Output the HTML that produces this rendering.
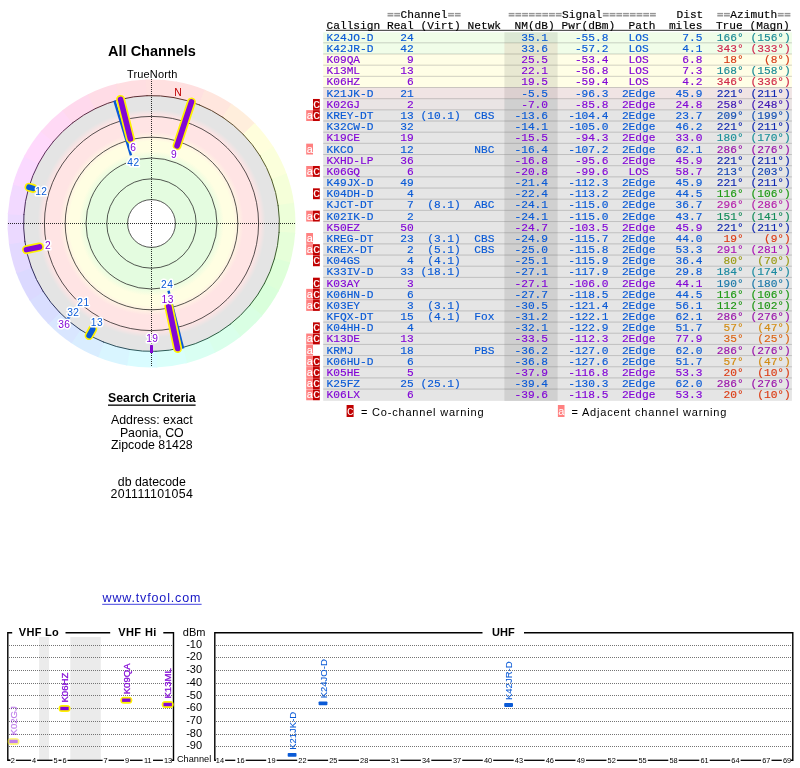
<!DOCTYPE html>
<html><head><meta charset="utf-8"><title>TV Fool</title>
<style>
html,body{margin:0;padding:0;background:#fff;}
svg{display:block;will-change:transform;}
text{font-family:"Liberation Sans",sans-serif;}
.m{font-family:"Liberation Mono",monospace;font-size:11.2px;white-space:pre;stroke-width:0.16px;}
.s{font-family:"Liberation Sans",sans-serif;}
.rl{font-family:"Liberation Sans",sans-serif;font-size:10.2px;letter-spacing:0.5px;text-anchor:middle;stroke:#fff;stroke-width:3px;stroke-linejoin:round;paint-order:stroke fill;}
</style></head><body>
<svg width="800" height="768" viewBox="0 0 800 768">
<rect width="800" height="768" fill="#fff"/>
<defs>
<radialGradient id="rg" gradientUnits="userSpaceOnUse" cx="151.5" cy="223.5" r="127.9">
<stop offset="0.0000" stop-color="#ffffff"/>
<stop offset="0.1869" stop-color="#ffffff"/>
<stop offset="0.1869" stop-color="#e4fce0"/>
<stop offset="0.5004" stop-color="#e4fce0"/>
<stop offset="0.5668" stop-color="#fffee2"/>
<stop offset="0.6411" stop-color="#fffee2"/>
<stop offset="0.7193" stop-color="#ffe4e4"/>
<stop offset="0.8405" stop-color="#ffe4e4"/>
<stop offset="0.8913" stop-color="#e4e4e4"/>
<stop offset="1.0000" stop-color="#e4e4e4"/>
</radialGradient>
</defs>
<path d="M151.50,223.50 L175.76,81.56 A144.0,144.0 0 0 1 206.14,90.27 Z" fill="#ffe0e0"/>
<path d="M151.50,223.50 L204.74,89.70 A144.0,144.0 0 0 1 232.65,104.54 Z" fill="#ffe6de"/>
<path d="M151.50,223.50 L231.40,103.70 A144.0,144.0 0 0 1 255.61,124.01 Z" fill="#ffeedc"/>
<path d="M151.50,223.50 L254.56,122.93 A144.0,144.0 0 0 1 274.02,147.83 Z" fill="#fffedc"/>
<path d="M151.50,223.50 L273.22,146.55 A144.0,144.0 0 0 1 287.07,174.96 Z" fill="#fbffdb"/>
<path d="M151.50,223.50 L286.56,173.54 A144.0,144.0 0 0 1 294.20,204.21 Z" fill="#f5ffd9"/>
<path d="M151.50,223.50 L293.99,202.71 A144.0,144.0 0 0 1 295.09,234.30 Z" fill="#edffd9"/>
<path d="M151.50,223.50 L295.20,232.79 A144.0,144.0 0 0 1 289.71,263.92 Z" fill="#e6ffd9"/>
<path d="M151.50,223.50 L290.13,262.47 A144.0,144.0 0 0 1 278.29,291.77 Z" fill="#deffd9"/>
<path d="M151.50,223.50 L279.00,290.44 A144.0,144.0 0 0 1 261.32,316.64 Z" fill="#d9ffdb"/>
<path d="M151.50,223.50 L262.29,315.48 A144.0,144.0 0 0 1 239.56,337.44 Z" fill="#d9ffe3"/>
<path d="M151.50,223.50 L240.75,336.51 A144.0,144.0 0 0 1 213.95,353.26 Z" fill="#d9ffeb"/>
<path d="M151.50,223.50 L215.30,352.59 A144.0,144.0 0 0 1 185.60,363.40 Z" fill="#d9fff2"/>
<path d="M151.50,223.50 L187.07,363.04 A144.0,144.0 0 0 1 155.77,367.44 Z" fill="#d9fffa"/>
<path d="M151.50,223.50 L157.28,367.38 A144.0,144.0 0 0 1 125.75,365.18 Z" fill="#d9fcff"/>
<path d="M151.50,223.50 L127.24,365.44 A144.0,144.0 0 0 1 96.86,356.73 Z" fill="#d9f5ff"/>
<path d="M151.50,223.50 L98.26,357.30 A144.0,144.0 0 0 1 70.35,342.46 Z" fill="#d9edff"/>
<path d="M151.50,223.50 L71.60,343.30 A144.0,144.0 0 0 1 47.39,322.99 Z" fill="#d9e6ff"/>
<path d="M151.50,223.50 L48.44,324.07 A144.0,144.0 0 0 1 28.98,299.17 Z" fill="#d9deff"/>
<path d="M151.50,223.50 L29.78,300.45 A144.0,144.0 0 0 1 15.93,272.04 Z" fill="#dbd9ff"/>
<path d="M151.50,223.50 L16.44,273.46 A144.0,144.0 0 0 1 8.80,242.79 Z" fill="#e3d9ff"/>
<path d="M151.50,223.50 L9.01,244.29 A144.0,144.0 0 0 1 7.91,212.70 Z" fill="#ebd9ff"/>
<path d="M151.50,223.50 L7.80,214.21 A144.0,144.0 0 0 1 13.29,183.08 Z" fill="#f2d9ff"/>
<path d="M151.50,223.50 L12.87,184.53 A144.0,144.0 0 0 1 24.71,155.23 Z" fill="#fad9ff"/>
<path d="M151.50,223.50 L24.00,156.56 A144.0,144.0 0 0 1 41.68,130.36 Z" fill="#ffd9fc"/>
<path d="M151.50,223.50 L40.71,131.52 A144.0,144.0 0 0 1 63.44,109.56 Z" fill="#ffd9f5"/>
<path d="M151.50,223.50 L62.25,110.49 A144.0,144.0 0 0 1 89.05,93.74 Z" fill="#ffd9ed"/>
<path d="M151.50,223.50 L87.70,94.41 A144.0,144.0 0 0 1 117.40,83.60 Z" fill="#ffdce6"/>
<path d="M151.50,223.50 L115.93,83.96 A144.0,144.0 0 0 1 147.23,79.56 Z" fill="#ffdee2"/>
<path d="M151.50,223.50 L145.72,79.62 A144.0,144.0 0 0 1 177.25,81.82 Z" fill="#ffe0e0"/>
<circle cx="151.5" cy="223.5" r="127.9" fill="url(#rg)"/>
<path d="M173.27,97.47 A127.9,127.9 0 0 1 199.83,105.08" fill="none" stroke="#5d3a2d" stroke-width="1"/>
<path d="M199.00,104.75 A127.9,127.9 0 0 1 223.39,117.72" fill="none" stroke="#5d432d" stroke-width="1"/>
<path d="M222.65,117.22 A127.9,127.9 0 0 1 243.81,134.97" fill="none" stroke="#5d4d2d" stroke-width="1"/>
<path d="M243.19,134.33 A127.9,127.9 0 0 1 260.20,156.10" fill="none" stroke="#5d572d" stroke-width="1"/>
<path d="M259.73,155.35 A127.9,127.9 0 0 1 271.84,180.18" fill="none" stroke="#5a5d2d" stroke-width="1"/>
<path d="M271.53,179.34 A127.9,127.9 0 0 1 278.22,206.14" fill="none" stroke="#505d2d" stroke-width="1"/>
<path d="M278.09,205.26 A127.9,127.9 0 0 1 279.06,232.87" fill="none" stroke="#465d2d" stroke-width="1"/>
<path d="M279.12,231.98 A127.9,127.9 0 0 1 274.32,259.18" fill="none" stroke="#3d5d2d" stroke-width="1"/>
<path d="M274.57,258.32 A127.9,127.9 0 0 1 264.22,283.94" fill="none" stroke="#335d2d" stroke-width="1"/>
<path d="M264.64,283.15 A127.9,127.9 0 0 1 249.19,306.05" fill="none" stroke="#2d5d30" stroke-width="1"/>
<path d="M249.76,305.37 A127.9,127.9 0 0 1 229.89,324.56" fill="none" stroke="#2d5d3a" stroke-width="1"/>
<path d="M230.59,324.01 A127.9,127.9 0 0 1 207.17,338.65" fill="none" stroke="#2d5d43" stroke-width="1"/>
<path d="M207.97,338.26 A127.9,127.9 0 0 1 182.01,347.71" fill="none" stroke="#2d5d4d" stroke-width="1"/>
<path d="M182.87,347.49 A127.9,127.9 0 0 1 155.52,351.34" fill="none" stroke="#2d5d57" stroke-width="1"/>
<path d="M156.41,351.31 A127.9,127.9 0 0 1 128.85,349.38" fill="none" stroke="#2d5a5d" stroke-width="1"/>
<path d="M129.73,349.53 A127.9,127.9 0 0 1 103.17,341.92" fill="none" stroke="#2d505d" stroke-width="1"/>
<path d="M104.00,342.25 A127.9,127.9 0 0 1 79.61,329.28" fill="none" stroke="#2d465d" stroke-width="1"/>
<path d="M80.35,329.78 A127.9,127.9 0 0 1 59.19,312.03" fill="none" stroke="#2d3d5d" stroke-width="1"/>
<path d="M59.81,312.67 A127.9,127.9 0 0 1 42.80,290.90" fill="none" stroke="#2d335d" stroke-width="1"/>
<path d="M43.27,291.65 A127.9,127.9 0 0 1 31.16,266.82" fill="none" stroke="#302d5d" stroke-width="1"/>
<path d="M31.47,267.66 A127.9,127.9 0 0 1 24.78,240.86" fill="none" stroke="#3a2d5d" stroke-width="1"/>
<path d="M24.91,241.74 A127.9,127.9 0 0 1 23.94,214.13" fill="none" stroke="#432d5d" stroke-width="1"/>
<path d="M23.88,215.02 A127.9,127.9 0 0 1 28.68,187.82" fill="none" stroke="#4d2d5d" stroke-width="1"/>
<path d="M28.43,188.68 A127.9,127.9 0 0 1 38.78,163.06" fill="none" stroke="#572d5d" stroke-width="1"/>
<path d="M38.36,163.85 A127.9,127.9 0 0 1 53.81,140.95" fill="none" stroke="#5d2d5a" stroke-width="1"/>
<path d="M53.24,141.63 A127.9,127.9 0 0 1 73.11,122.44" fill="none" stroke="#5d2d50" stroke-width="1"/>
<path d="M72.41,122.99 A127.9,127.9 0 0 1 95.83,108.35" fill="none" stroke="#5d2d46" stroke-width="1"/>
<path d="M95.03,108.74 A127.9,127.9 0 0 1 120.99,99.29" fill="none" stroke="#5d2d3d" stroke-width="1"/>
<path d="M120.13,99.51 A127.9,127.9 0 0 1 147.48,95.66" fill="none" stroke="#5d2d33" stroke-width="1"/>
<path d="M146.59,95.69 A127.9,127.9 0 0 1 174.15,97.62" fill="none" stroke="#5d302d" stroke-width="1"/>
<circle cx="151.5" cy="223.5" r="23.9" fill="none" stroke="#151515" stroke-width="0.72"/>
<circle cx="151.5" cy="223.5" r="44.7" fill="none" stroke="#151515" stroke-width="0.72"/>
<circle cx="151.5" cy="223.5" r="65.5" fill="none" stroke="#151515" stroke-width="0.72"/>
<circle cx="151.5" cy="223.5" r="86.3" fill="none" stroke="#151515" stroke-width="0.72"/>
<circle cx="151.5" cy="223.5" r="107.1" fill="none" stroke="#151515" stroke-width="0.72"/>
<path d="M8,223.5 H296 M151.5,79 V367" stroke="#000" stroke-opacity="0.82" stroke-width="1" stroke-dasharray="1 1" fill="none" shape-rendering="crispEdges"/>
<path d="M114.39,100.58 L130.95,155.43" stroke="#0a5ad6" stroke-width="2.4"/>
<path d="M183.14,348.56 L168.50,290.68" stroke="#0a5ad6" stroke-width="2.4"/>
<path d="M66.69,320.04 L76.92,308.39" stroke="#0a5ad6" stroke-width="2.4"/>
<path d="M151.50,345.10 L151.50,353.00" stroke="#8206d6" stroke-width="3"/>
<path d="M120.56,99.40 L130.40,138.89" stroke="#fff200" stroke-width="9" stroke-linecap="round"/>
<path d="M120.56,99.40 L130.40,138.89" stroke="#8206d6" stroke-width="5.6" stroke-linecap="round"/>
<path d="M191.45,102.00 L177.05,145.79" stroke="#fff200" stroke-width="9" stroke-linecap="round"/>
<path d="M191.45,102.00 L177.05,145.79" stroke="#8206d6" stroke-width="5.6" stroke-linecap="round"/>
<path d="M177.61,348.50 L168.80,306.31" stroke="#fff200" stroke-width="9" stroke-linecap="round"/>
<path d="M177.61,348.50 L168.80,306.31" stroke="#8206d6" stroke-width="5.6" stroke-linecap="round"/>
<path d="M26.40,249.63 L39.52,246.89" stroke="#fff200" stroke-width="9" stroke-linecap="round"/>
<path d="M26.40,249.63 L39.52,246.89" stroke="#8206d6" stroke-width="5.6" stroke-linecap="round"/>
<path d="M28.96,187.20 L33.09,188.42" stroke="#fff200" stroke-width="9" stroke-linecap="round"/>
<path d="M28.96,187.20 L33.09,188.42" stroke="#0a5ad6" stroke-width="5.6" stroke-linecap="round"/>
<path d="M89.10,335.60 L92.75,329.05" stroke="#fff200" stroke-width="9" stroke-linecap="round"/>
<path d="M89.10,335.60 L92.75,329.05" stroke="#0a5ad6" stroke-width="5.6" stroke-linecap="round"/>
<text class="s" x="178" y="95.9" text-anchor="middle" font-size="10.4" fill="#c00000">N</text>
<text class="rl" x="133.3" y="151.2" fill="#8206d6">6</text>
<text class="rl" x="133.5" y="166.2" fill="#0a5ad6">42</text>
<text class="rl" x="174.1" y="158.0" fill="#8206d6">9</text>
<text class="rl" x="41.3" y="194.5" fill="#0a5ad6">12</text>
<text class="rl" x="48.0" y="249.0" fill="#8206d6">2</text>
<text class="rl" x="167.2" y="288.3" fill="#0a5ad6">24</text>
<text class="rl" x="167.7" y="302.9" fill="#8206d6">13</text>
<text class="rl" x="152.3" y="342.0" fill="#8206d6">19</text>
<text class="rl" x="97.0" y="325.6" fill="#0a5ad6">13</text>
<text class="rl" x="83.5" y="306.1" fill="#0a5ad6">21</text>
<text class="rl" x="73.3" y="316.4" fill="#0a5ad6">32</text>
<text class="rl" x="64.3" y="327.6" fill="#8206d6">36</text>
<text x="152" y="56.1" text-anchor="middle" font-weight="bold" font-size="14.5" class="s">All Channels</text>
<text x="152.3" y="77.8" text-anchor="middle" font-size="11" letter-spacing="0.15" class="s">TrueNorth</text>
<text x="151.8" y="401.9" text-anchor="middle" font-weight="bold" font-size="12.3" class="s">Search Criteria</text>
<rect x="108" y="404.5" width="87.6" height="1.3" fill="#000"/>
<text x="151.8" y="423.75" text-anchor="middle" font-size="12.35" class="s">Address: exact</text>
<text x="151.8" y="436.9" text-anchor="middle" font-size="12.35" class="s">Paonia, CO</text>
<text x="151.8" y="448.75" text-anchor="middle" font-size="12.35" class="s">Zipcode 81428</text>
<text x="151.8" y="485.6" text-anchor="middle" font-size="12.35" class="s">db datecode</text>
<text x="151.8" y="497.8" text-anchor="middle" font-size="12.35" class="s" letter-spacing="0.33">201111101054</text>
<text x="151.9" y="602.2" text-anchor="middle" font-size="12.5" letter-spacing="0.85" fill="#1414c4" class="s">www.tvfool.com</text>
<rect x="102.2" y="603.8" width="99.4" height="1" fill="#4646e0"/>
<rect x="323.2" y="32.30" width="468.7" height="10.57" fill="#f0fde8"/>
<rect x="504.4" y="32.30" width="53.2" height="10.57" fill="#dce8d4"/>
<rect x="323.2" y="42.82" width="468.7" height="11.22" fill="#f0fde8"/>
<rect x="504.4" y="42.82" width="53.2" height="11.22" fill="#e8e8d2"/>
<rect x="323.2" y="53.99" width="468.7" height="11.22" fill="#fffee6"/>
<rect x="504.4" y="53.99" width="53.2" height="11.22" fill="#e8e8d2"/>
<rect x="323.2" y="65.16" width="468.7" height="11.22" fill="#fffee6"/>
<rect x="504.4" y="65.16" width="53.2" height="11.22" fill="#e8e8d2"/>
<rect x="323.2" y="76.33" width="468.7" height="11.22" fill="#fffee6"/>
<rect x="504.4" y="76.33" width="53.2" height="11.22" fill="#e8e8d2"/>
<rect x="323.2" y="87.50" width="468.7" height="11.22" fill="#f0e4e4"/>
<rect x="504.4" y="87.50" width="53.2" height="11.22" fill="#dcd0d0"/>
<rect x="323.2" y="98.67" width="468.7" height="11.22" fill="#eae4e4"/>
<rect x="504.4" y="98.67" width="53.2" height="11.22" fill="#d0d0d0"/>
<rect x="323.2" y="109.84" width="468.7" height="11.22" fill="#e5e5e5"/>
<rect x="504.4" y="109.84" width="53.2" height="11.22" fill="#d0d0d0"/>
<rect x="323.2" y="121.01" width="468.7" height="11.22" fill="#e5e5e5"/>
<rect x="504.4" y="121.01" width="53.2" height="11.22" fill="#d0d0d0"/>
<rect x="323.2" y="132.18" width="468.7" height="11.22" fill="#e5e5e5"/>
<rect x="504.4" y="132.18" width="53.2" height="11.22" fill="#d0d0d0"/>
<rect x="323.2" y="143.35" width="468.7" height="11.22" fill="#e5e5e5"/>
<rect x="504.4" y="143.35" width="53.2" height="11.22" fill="#d0d0d0"/>
<rect x="323.2" y="154.52" width="468.7" height="11.22" fill="#e5e5e5"/>
<rect x="504.4" y="154.52" width="53.2" height="11.22" fill="#d0d0d0"/>
<rect x="323.2" y="165.69" width="468.7" height="11.22" fill="#e5e5e5"/>
<rect x="504.4" y="165.69" width="53.2" height="11.22" fill="#d0d0d0"/>
<rect x="323.2" y="176.86" width="468.7" height="11.22" fill="#e5e5e5"/>
<rect x="504.4" y="176.86" width="53.2" height="11.22" fill="#d0d0d0"/>
<rect x="323.2" y="188.03" width="468.7" height="11.22" fill="#e5e5e5"/>
<rect x="504.4" y="188.03" width="53.2" height="11.22" fill="#d0d0d0"/>
<rect x="323.2" y="199.20" width="468.7" height="11.22" fill="#e5e5e5"/>
<rect x="504.4" y="199.20" width="53.2" height="11.22" fill="#d0d0d0"/>
<rect x="323.2" y="210.37" width="468.7" height="11.22" fill="#e5e5e5"/>
<rect x="504.4" y="210.37" width="53.2" height="11.22" fill="#d0d0d0"/>
<rect x="323.2" y="221.54" width="468.7" height="11.22" fill="#e5e5e5"/>
<rect x="504.4" y="221.54" width="53.2" height="11.22" fill="#d0d0d0"/>
<rect x="323.2" y="232.71" width="468.7" height="11.22" fill="#e5e5e5"/>
<rect x="504.4" y="232.71" width="53.2" height="11.22" fill="#d0d0d0"/>
<rect x="323.2" y="243.88" width="468.7" height="11.22" fill="#e5e5e5"/>
<rect x="504.4" y="243.88" width="53.2" height="11.22" fill="#d0d0d0"/>
<rect x="323.2" y="255.05" width="468.7" height="11.22" fill="#e5e5e5"/>
<rect x="504.4" y="255.05" width="53.2" height="11.22" fill="#d0d0d0"/>
<rect x="323.2" y="266.22" width="468.7" height="11.22" fill="#e5e5e5"/>
<rect x="504.4" y="266.22" width="53.2" height="11.22" fill="#d0d0d0"/>
<rect x="323.2" y="277.39" width="468.7" height="11.22" fill="#e5e5e5"/>
<rect x="504.4" y="277.39" width="53.2" height="11.22" fill="#d0d0d0"/>
<rect x="323.2" y="288.56" width="468.7" height="11.22" fill="#e5e5e5"/>
<rect x="504.4" y="288.56" width="53.2" height="11.22" fill="#d0d0d0"/>
<rect x="323.2" y="299.73" width="468.7" height="11.22" fill="#e5e5e5"/>
<rect x="504.4" y="299.73" width="53.2" height="11.22" fill="#d0d0d0"/>
<rect x="323.2" y="310.90" width="468.7" height="11.22" fill="#e5e5e5"/>
<rect x="504.4" y="310.90" width="53.2" height="11.22" fill="#d0d0d0"/>
<rect x="323.2" y="322.07" width="468.7" height="11.22" fill="#e5e5e5"/>
<rect x="504.4" y="322.07" width="53.2" height="11.22" fill="#d0d0d0"/>
<rect x="323.2" y="333.24" width="468.7" height="11.22" fill="#e5e5e5"/>
<rect x="504.4" y="333.24" width="53.2" height="11.22" fill="#d0d0d0"/>
<rect x="323.2" y="344.41" width="468.7" height="11.22" fill="#e5e5e5"/>
<rect x="504.4" y="344.41" width="53.2" height="11.22" fill="#d0d0d0"/>
<rect x="323.2" y="355.58" width="468.7" height="11.22" fill="#e5e5e5"/>
<rect x="504.4" y="355.58" width="53.2" height="11.22" fill="#d0d0d0"/>
<rect x="323.2" y="366.75" width="468.7" height="11.22" fill="#e5e5e5"/>
<rect x="504.4" y="366.75" width="53.2" height="11.22" fill="#d0d0d0"/>
<rect x="323.2" y="377.92" width="468.7" height="11.22" fill="#e5e5e5"/>
<rect x="504.4" y="377.92" width="53.2" height="11.22" fill="#d0d0d0"/>
<rect x="323.2" y="389.09" width="468.7" height="11.76" fill="#e5e5e5"/>
<rect x="504.4" y="389.09" width="53.2" height="11.76" fill="#d0d0d0"/>
<rect x="323.2" y="42.32" width="468.7" height="1" fill="#000" fill-opacity="0.18"/>
<rect x="323.2" y="53.49" width="468.7" height="1" fill="#000" fill-opacity="0.18"/>
<rect x="323.2" y="64.66" width="468.7" height="1" fill="#000" fill-opacity="0.18"/>
<rect x="323.2" y="75.83" width="468.7" height="1" fill="#000" fill-opacity="0.18"/>
<rect x="323.2" y="87.00" width="468.7" height="1" fill="#000" fill-opacity="0.18"/>
<rect x="323.2" y="98.17" width="468.7" height="1" fill="#000" fill-opacity="0.18"/>
<rect x="323.2" y="109.34" width="468.7" height="1" fill="#000" fill-opacity="0.18"/>
<rect x="323.2" y="120.51" width="468.7" height="1" fill="#000" fill-opacity="0.18"/>
<rect x="323.2" y="131.68" width="468.7" height="1" fill="#000" fill-opacity="0.18"/>
<rect x="323.2" y="142.85" width="468.7" height="1" fill="#000" fill-opacity="0.18"/>
<rect x="323.2" y="154.02" width="468.7" height="1" fill="#000" fill-opacity="0.18"/>
<rect x="323.2" y="165.19" width="468.7" height="1" fill="#000" fill-opacity="0.18"/>
<rect x="323.2" y="176.36" width="468.7" height="1" fill="#000" fill-opacity="0.18"/>
<rect x="323.2" y="187.53" width="468.7" height="1" fill="#000" fill-opacity="0.18"/>
<rect x="323.2" y="198.70" width="468.7" height="1" fill="#000" fill-opacity="0.18"/>
<rect x="323.2" y="209.87" width="468.7" height="1" fill="#000" fill-opacity="0.18"/>
<rect x="323.2" y="221.04" width="468.7" height="1" fill="#000" fill-opacity="0.18"/>
<rect x="323.2" y="232.21" width="468.7" height="1" fill="#000" fill-opacity="0.18"/>
<rect x="323.2" y="243.38" width="468.7" height="1" fill="#000" fill-opacity="0.18"/>
<rect x="323.2" y="254.55" width="468.7" height="1" fill="#000" fill-opacity="0.18"/>
<rect x="323.2" y="265.72" width="468.7" height="1" fill="#000" fill-opacity="0.18"/>
<rect x="323.2" y="276.89" width="468.7" height="1" fill="#000" fill-opacity="0.18"/>
<rect x="323.2" y="288.06" width="468.7" height="1" fill="#000" fill-opacity="0.18"/>
<rect x="323.2" y="299.23" width="468.7" height="1" fill="#000" fill-opacity="0.18"/>
<rect x="323.2" y="310.40" width="468.7" height="1" fill="#000" fill-opacity="0.18"/>
<rect x="323.2" y="321.57" width="468.7" height="1" fill="#000" fill-opacity="0.18"/>
<rect x="323.2" y="332.74" width="468.7" height="1" fill="#000" fill-opacity="0.18"/>
<rect x="323.2" y="343.91" width="468.7" height="1" fill="#000" fill-opacity="0.18"/>
<rect x="323.2" y="355.08" width="468.7" height="1" fill="#000" fill-opacity="0.18"/>
<rect x="323.2" y="366.25" width="468.7" height="1" fill="#000" fill-opacity="0.18"/>
<rect x="323.2" y="377.42" width="468.7" height="1" fill="#000" fill-opacity="0.18"/>
<rect x="323.2" y="388.59" width="468.7" height="1" fill="#000" fill-opacity="0.18"/>
<rect x="326" y="29.8" width="464.8" height="1.1" fill="#444"/>
<rect x="387.52" y="12.9" width="5.83" height="1.45" fill="#959595"/><rect x="387.52" y="15.05" width="5.83" height="1.45" fill="#959595"/>
<rect x="394.25" y="12.9" width="5.83" height="1.45" fill="#959595"/><rect x="394.25" y="15.05" width="5.83" height="1.45" fill="#959595"/>
<text class="m" x="400.53" y="17.60" fill="#000" stroke="#000">Channel</text>
<rect x="448.09" y="12.9" width="5.83" height="1.45" fill="#959595"/><rect x="448.09" y="15.05" width="5.83" height="1.45" fill="#959595"/>
<rect x="454.82" y="12.9" width="5.83" height="1.45" fill="#959595"/><rect x="454.82" y="15.05" width="5.83" height="1.45" fill="#959595"/>
<rect x="508.66" y="12.9" width="5.83" height="1.45" fill="#959595"/><rect x="508.66" y="15.05" width="5.83" height="1.45" fill="#959595"/>
<rect x="515.39" y="12.9" width="5.83" height="1.45" fill="#959595"/><rect x="515.39" y="15.05" width="5.83" height="1.45" fill="#959595"/>
<rect x="522.12" y="12.9" width="5.83" height="1.45" fill="#959595"/><rect x="522.12" y="15.05" width="5.83" height="1.45" fill="#959595"/>
<rect x="528.85" y="12.9" width="5.83" height="1.45" fill="#959595"/><rect x="528.85" y="15.05" width="5.83" height="1.45" fill="#959595"/>
<rect x="535.58" y="12.9" width="5.83" height="1.45" fill="#959595"/><rect x="535.58" y="15.05" width="5.83" height="1.45" fill="#959595"/>
<rect x="542.31" y="12.9" width="5.83" height="1.45" fill="#959595"/><rect x="542.31" y="15.05" width="5.83" height="1.45" fill="#959595"/>
<rect x="549.04" y="12.9" width="5.83" height="1.45" fill="#959595"/><rect x="549.04" y="15.05" width="5.83" height="1.45" fill="#959595"/>
<rect x="555.77" y="12.9" width="5.83" height="1.45" fill="#959595"/><rect x="555.77" y="15.05" width="5.83" height="1.45" fill="#959595"/>
<text class="m" x="562.05" y="17.60" fill="#000" stroke="#000">Signal</text>
<rect x="602.88" y="12.9" width="5.83" height="1.45" fill="#959595"/><rect x="602.88" y="15.05" width="5.83" height="1.45" fill="#959595"/>
<rect x="609.61" y="12.9" width="5.83" height="1.45" fill="#959595"/><rect x="609.61" y="15.05" width="5.83" height="1.45" fill="#959595"/>
<rect x="616.34" y="12.9" width="5.83" height="1.45" fill="#959595"/><rect x="616.34" y="15.05" width="5.83" height="1.45" fill="#959595"/>
<rect x="623.07" y="12.9" width="5.83" height="1.45" fill="#959595"/><rect x="623.07" y="15.05" width="5.83" height="1.45" fill="#959595"/>
<rect x="629.80" y="12.9" width="5.83" height="1.45" fill="#959595"/><rect x="629.80" y="15.05" width="5.83" height="1.45" fill="#959595"/>
<rect x="636.53" y="12.9" width="5.83" height="1.45" fill="#959595"/><rect x="636.53" y="15.05" width="5.83" height="1.45" fill="#959595"/>
<rect x="643.26" y="12.9" width="5.83" height="1.45" fill="#959595"/><rect x="643.26" y="15.05" width="5.83" height="1.45" fill="#959595"/>
<rect x="649.99" y="12.9" width="5.83" height="1.45" fill="#959595"/><rect x="649.99" y="15.05" width="5.83" height="1.45" fill="#959595"/>
<text class="m" x="676.46" y="17.60" fill="#000" stroke="#000">Dist</text>
<rect x="717.29" y="12.9" width="5.83" height="1.45" fill="#959595"/><rect x="717.29" y="15.05" width="5.83" height="1.45" fill="#959595"/>
<rect x="724.02" y="12.9" width="5.83" height="1.45" fill="#959595"/><rect x="724.02" y="15.05" width="5.83" height="1.45" fill="#959595"/>
<text class="m" x="730.30" y="17.60" fill="#000" stroke="#000">Azimuth</text>
<rect x="777.86" y="12.9" width="5.83" height="1.45" fill="#959595"/><rect x="777.86" y="15.05" width="5.83" height="1.45" fill="#959595"/>
<rect x="784.59" y="12.9" width="5.83" height="1.45" fill="#959595"/><rect x="784.59" y="15.05" width="5.83" height="1.45" fill="#959595"/>
<text class="m" x="326.50" y="28.50" fill="#000" stroke="#000">Callsign Real (Virt) Netwk  NM(dB) Pwr(dBm)  Path  miles  True (Magn)</text>
<text class="m" x="326.50" y="40.80" fill="#0a5ad6" stroke="#0a5ad6">K24JO-D    24                35.1    -55.8   LOS     7.5</text>
<text class="m" x="716.84" y="40.80" fill="#1a8a96" stroke="#1a8a96">166°</text>
<text class="m" x="750.49" y="40.80" fill="#1a8a96" stroke="#1a8a96">(156°)</text>
<text class="m" x="326.50" y="51.97" fill="#0a5ad6" stroke="#0a5ad6">K42JR-D    42                33.6    -57.2   LOS     4.1</text>
<text class="m" x="716.84" y="51.97" fill="#d02850" stroke="#d02850">343°</text>
<text class="m" x="750.49" y="51.97" fill="#d02850" stroke="#d02850">(333°)</text>
<text class="m" x="326.50" y="63.14" fill="#8206d6" stroke="#8206d6">K09QA       9                25.5    -53.4   LOS     6.8</text>
<text class="m" x="723.57" y="63.14" fill="#d63c18" stroke="#d63c18">18°</text>
<text class="m" x="763.95" y="63.14" fill="#d63c18" stroke="#d63c18">(8°)</text>
<text class="m" x="326.50" y="74.31" fill="#8206d6" stroke="#8206d6">K13ML      13                22.1    -56.8   LOS     7.3</text>
<text class="m" x="716.84" y="74.31" fill="#1a8a96" stroke="#1a8a96">168°</text>
<text class="m" x="750.49" y="74.31" fill="#1a8a96" stroke="#1a8a96">(158°)</text>
<text class="m" x="326.50" y="85.48" fill="#8206d6" stroke="#8206d6">K06HZ       6                19.5    -59.4   LOS     4.2</text>
<text class="m" x="716.84" y="85.48" fill="#d02848" stroke="#d02848">346°</text>
<text class="m" x="750.49" y="85.48" fill="#d02848" stroke="#d02848">(336°)</text>
<text class="m" x="326.50" y="96.65" fill="#0a5ad6" stroke="#0a5ad6">K21JK-D    21                -5.5    -96.3  2Edge   45.9</text>
<text class="m" x="716.84" y="96.65" fill="#1028b0" stroke="#1028b0">221°</text>
<text class="m" x="750.49" y="96.65" fill="#1028b0" stroke="#1028b0">(211°)</text>
<text class="m" x="326.50" y="107.82" fill="#8206d6" stroke="#8206d6">K02GJ       2                -7.0    -85.8  2Edge   24.8</text>
<text class="m" x="716.84" y="107.82" fill="#3c14b4" stroke="#3c14b4">258°</text>
<text class="m" x="750.49" y="107.82" fill="#3c14b4" stroke="#3c14b4">(248°)</text>
<rect x="313" y="98.97" width="6.8" height="10.87" fill="#c00000"/>
<text class="m" x="313.04" y="107.82" fill="#fff" stroke="#fff" dx="0.3">C</text>
<text class="m" x="326.50" y="118.99" fill="#0a5ad6" stroke="#0a5ad6">KREY-DT    13 (10.1)  CBS   -13.6   -104.4  2Edge   23.7</text>
<text class="m" x="716.84" y="118.99" fill="#1450b4" stroke="#1450b4">209°</text>
<text class="m" x="750.49" y="118.99" fill="#1450b4" stroke="#1450b4">(199°)</text>
<rect x="313" y="110.14" width="6.8" height="10.87" fill="#c00000"/>
<text class="m" x="313.04" y="118.99" fill="#fff" stroke="#fff" dx="0.3">C</text>
<rect x="306.2" y="110.14" width="6.8" height="10.87" fill="#ff8080"/>
<text class="m" x="306.31" y="118.99" fill="#fff" stroke="#fff" dx="0.3">a</text>
<text class="m" x="326.50" y="130.16" fill="#0a5ad6" stroke="#0a5ad6">K32CW-D    32               -14.1   -105.0  2Edge   46.2</text>
<text class="m" x="716.84" y="130.16" fill="#1028b0" stroke="#1028b0">221°</text>
<text class="m" x="750.49" y="130.16" fill="#1028b0" stroke="#1028b0">(211°)</text>
<text class="m" x="326.50" y="141.33" fill="#8206d6" stroke="#8206d6">K19CE      19               -15.5    -94.3  2Edge   33.0</text>
<text class="m" x="716.84" y="141.33" fill="#1a9098" stroke="#1a9098">180°</text>
<text class="m" x="750.49" y="141.33" fill="#1a9098" stroke="#1a9098">(170°)</text>
<text class="m" x="326.50" y="152.50" fill="#0a5ad6" stroke="#0a5ad6">KKCO       12         NBC   -16.4   -107.2  2Edge   62.1</text>
<text class="m" x="716.84" y="152.50" fill="#9a14aa" stroke="#9a14aa">286°</text>
<text class="m" x="750.49" y="152.50" fill="#9a14aa" stroke="#9a14aa">(276°)</text>
<rect x="306.2" y="143.65" width="6.8" height="10.87" fill="#ff8080"/>
<text class="m" x="306.31" y="152.50" fill="#fff" stroke="#fff" dx="0.3">a</text>
<text class="m" x="326.50" y="163.67" fill="#8206d6" stroke="#8206d6">KXHD-LP    36               -16.8    -95.6  2Edge   45.9</text>
<text class="m" x="716.84" y="163.67" fill="#1028b0" stroke="#1028b0">221°</text>
<text class="m" x="750.49" y="163.67" fill="#1028b0" stroke="#1028b0">(211°)</text>
<text class="m" x="326.50" y="174.84" fill="#8206d6" stroke="#8206d6">K06GQ       6               -20.8    -99.6   LOS    58.7</text>
<text class="m" x="716.84" y="174.84" fill="#1444b4" stroke="#1444b4">213°</text>
<text class="m" x="750.49" y="174.84" fill="#1444b4" stroke="#1444b4">(203°)</text>
<rect x="313" y="165.99" width="6.8" height="10.87" fill="#c00000"/>
<text class="m" x="313.04" y="174.84" fill="#fff" stroke="#fff" dx="0.3">C</text>
<rect x="306.2" y="165.99" width="6.8" height="10.87" fill="#ff8080"/>
<text class="m" x="306.31" y="174.84" fill="#fff" stroke="#fff" dx="0.3">a</text>
<text class="m" x="326.50" y="186.01" fill="#0a5ad6" stroke="#0a5ad6">K49JX-D    49               -21.4   -112.3  2Edge   45.9</text>
<text class="m" x="716.84" y="186.01" fill="#1028b0" stroke="#1028b0">221°</text>
<text class="m" x="750.49" y="186.01" fill="#1028b0" stroke="#1028b0">(211°)</text>
<text class="m" x="326.50" y="197.18" fill="#0a5ad6" stroke="#0a5ad6">K04DH-D     4               -22.4   -113.2  2Edge   44.5</text>
<text class="m" x="716.84" y="197.18" fill="#1e9a14" stroke="#1e9a14">116°</text>
<text class="m" x="750.49" y="197.18" fill="#1e9a14" stroke="#1e9a14">(106°)</text>
<rect x="313" y="188.33" width="6.8" height="10.87" fill="#c00000"/>
<text class="m" x="313.04" y="197.18" fill="#fff" stroke="#fff" dx="0.3">C</text>
<text class="m" x="326.50" y="208.35" fill="#0a5ad6" stroke="#0a5ad6">KJCT-DT     7  (8.1)  ABC   -24.1   -115.0  2Edge   36.7</text>
<text class="m" x="716.84" y="208.35" fill="#b41eaa" stroke="#b41eaa">296°</text>
<text class="m" x="750.49" y="208.35" fill="#b41eaa" stroke="#b41eaa">(286°)</text>
<text class="m" x="326.50" y="219.52" fill="#0a5ad6" stroke="#0a5ad6">K02IK-D     2               -24.1   -115.0  2Edge   43.7</text>
<text class="m" x="716.84" y="219.52" fill="#148c5a" stroke="#148c5a">151°</text>
<text class="m" x="750.49" y="219.52" fill="#148c5a" stroke="#148c5a">(141°)</text>
<rect x="313" y="210.67" width="6.8" height="10.87" fill="#c00000"/>
<text class="m" x="313.04" y="219.52" fill="#fff" stroke="#fff" dx="0.3">C</text>
<rect x="306.2" y="210.67" width="6.8" height="10.87" fill="#ff8080"/>
<text class="m" x="306.31" y="219.52" fill="#fff" stroke="#fff" dx="0.3">a</text>
<text class="m" x="326.50" y="230.69" fill="#8206d6" stroke="#8206d6">K50EZ      50               -24.7   -103.5  2Edge   45.9</text>
<text class="m" x="716.84" y="230.69" fill="#1028b0" stroke="#1028b0">221°</text>
<text class="m" x="750.49" y="230.69" fill="#1028b0" stroke="#1028b0">(211°)</text>
<text class="m" x="326.50" y="241.86" fill="#0a5ad6" stroke="#0a5ad6">KREG-DT    23  (3.1)  CBS   -24.9   -115.7  2Edge   44.0</text>
<text class="m" x="723.57" y="241.86" fill="#dc3c14" stroke="#dc3c14">19°</text>
<text class="m" x="763.95" y="241.86" fill="#dc3c14" stroke="#dc3c14">(9°)</text>
<rect x="306.2" y="233.01" width="6.8" height="10.87" fill="#ff8080"/>
<text class="m" x="306.31" y="241.86" fill="#fff" stroke="#fff" dx="0.3">a</text>
<text class="m" x="326.50" y="253.03" fill="#0a5ad6" stroke="#0a5ad6">KREX-DT     2  (5.1)  CBS   -25.0   -115.8  2Edge   53.3</text>
<text class="m" x="716.84" y="253.03" fill="#aa14b4" stroke="#aa14b4">291°</text>
<text class="m" x="750.49" y="253.03" fill="#aa14b4" stroke="#aa14b4">(281°)</text>
<rect x="313" y="244.18" width="6.8" height="10.87" fill="#c00000"/>
<text class="m" x="313.04" y="253.03" fill="#fff" stroke="#fff" dx="0.3">C</text>
<rect x="306.2" y="244.18" width="6.8" height="10.87" fill="#ff8080"/>
<text class="m" x="306.31" y="253.03" fill="#fff" stroke="#fff" dx="0.3">a</text>
<text class="m" x="326.50" y="264.20" fill="#0a5ad6" stroke="#0a5ad6">K04GS       4  (4.1)        -25.1   -115.9  2Edge   36.4</text>
<text class="m" x="723.57" y="264.20" fill="#9a9a14" stroke="#9a9a14">80°</text>
<text class="m" x="757.22" y="264.20" fill="#9a9a14" stroke="#9a9a14">(70°)</text>
<rect x="313" y="255.35" width="6.8" height="10.87" fill="#c00000"/>
<text class="m" x="313.04" y="264.20" fill="#fff" stroke="#fff" dx="0.3">C</text>
<text class="m" x="326.50" y="275.37" fill="#0a5ad6" stroke="#0a5ad6">K33IV-D    33 (18.1)        -27.1   -117.9  2Edge   29.8</text>
<text class="m" x="716.84" y="275.37" fill="#1a8aa0" stroke="#1a8aa0">184°</text>
<text class="m" x="750.49" y="275.37" fill="#1a8aa0" stroke="#1a8aa0">(174°)</text>
<text class="m" x="326.50" y="286.54" fill="#8206d6" stroke="#8206d6">K03AY       3               -27.1   -106.0  2Edge   44.1</text>
<text class="m" x="716.84" y="286.54" fill="#1a78a8" stroke="#1a78a8">190°</text>
<text class="m" x="750.49" y="286.54" fill="#1a78a8" stroke="#1a78a8">(180°)</text>
<rect x="313" y="277.69" width="6.8" height="10.87" fill="#c00000"/>
<text class="m" x="313.04" y="286.54" fill="#fff" stroke="#fff" dx="0.3">C</text>
<text class="m" x="326.50" y="297.71" fill="#0a5ad6" stroke="#0a5ad6">K06HN-D     6               -27.7   -118.5  2Edge   44.5</text>
<text class="m" x="716.84" y="297.71" fill="#1e9a14" stroke="#1e9a14">116°</text>
<text class="m" x="750.49" y="297.71" fill="#1e9a14" stroke="#1e9a14">(106°)</text>
<rect x="313" y="288.86" width="6.8" height="10.87" fill="#c00000"/>
<text class="m" x="313.04" y="297.71" fill="#fff" stroke="#fff" dx="0.3">C</text>
<rect x="306.2" y="288.86" width="6.8" height="10.87" fill="#ff8080"/>
<text class="m" x="306.31" y="297.71" fill="#fff" stroke="#fff" dx="0.3">a</text>
<text class="m" x="326.50" y="308.88" fill="#0a5ad6" stroke="#0a5ad6">K03EY       3  (3.1)        -30.5   -121.4  2Edge   56.1</text>
<text class="m" x="716.84" y="308.88" fill="#1e9614" stroke="#1e9614">112°</text>
<text class="m" x="750.49" y="308.88" fill="#1e9614" stroke="#1e9614">(102°)</text>
<rect x="313" y="300.03" width="6.8" height="10.87" fill="#c00000"/>
<text class="m" x="313.04" y="308.88" fill="#fff" stroke="#fff" dx="0.3">C</text>
<rect x="306.2" y="300.03" width="6.8" height="10.87" fill="#ff8080"/>
<text class="m" x="306.31" y="308.88" fill="#fff" stroke="#fff" dx="0.3">a</text>
<text class="m" x="326.50" y="320.05" fill="#0a5ad6" stroke="#0a5ad6">KFQX-DT    15  (4.1)  Fox   -31.2   -122.1  2Edge   62.1</text>
<text class="m" x="716.84" y="320.05" fill="#9a14aa" stroke="#9a14aa">286°</text>
<text class="m" x="750.49" y="320.05" fill="#9a14aa" stroke="#9a14aa">(276°)</text>
<text class="m" x="326.50" y="331.22" fill="#0a5ad6" stroke="#0a5ad6">K04HH-D     4               -32.1   -122.9  2Edge   51.7</text>
<text class="m" x="723.57" y="331.22" fill="#d28c14" stroke="#d28c14">57°</text>
<text class="m" x="757.22" y="331.22" fill="#d28c14" stroke="#d28c14">(47°)</text>
<rect x="313" y="322.37" width="6.8" height="10.87" fill="#c00000"/>
<text class="m" x="313.04" y="331.22" fill="#fff" stroke="#fff" dx="0.3">C</text>
<text class="m" x="326.50" y="342.39" fill="#8206d6" stroke="#8206d6">K13DE      13               -33.5   -112.3  2Edge   77.9</text>
<text class="m" x="723.57" y="342.39" fill="#dc6414" stroke="#dc6414">35°</text>
<text class="m" x="757.22" y="342.39" fill="#dc6414" stroke="#dc6414">(25°)</text>
<rect x="313" y="333.54" width="6.8" height="10.87" fill="#c00000"/>
<text class="m" x="313.04" y="342.39" fill="#fff" stroke="#fff" dx="0.3">C</text>
<rect x="306.2" y="333.54" width="6.8" height="10.87" fill="#ff8080"/>
<text class="m" x="306.31" y="342.39" fill="#fff" stroke="#fff" dx="0.3">a</text>
<text class="m" x="326.50" y="353.56" fill="#0a5ad6" stroke="#0a5ad6">KRMJ       18         PBS   -36.2   -127.0  2Edge   62.0</text>
<text class="m" x="716.84" y="353.56" fill="#9a14aa" stroke="#9a14aa">286°</text>
<text class="m" x="750.49" y="353.56" fill="#9a14aa" stroke="#9a14aa">(276°)</text>
<rect x="306.2" y="344.71" width="6.8" height="10.87" fill="#ff8080"/>
<text class="m" x="306.31" y="353.56" fill="#fff" stroke="#fff" dx="0.3">a</text>
<text class="m" x="326.50" y="364.73" fill="#0a5ad6" stroke="#0a5ad6">K06HU-D     6               -36.8   -127.6  2Edge   51.7</text>
<text class="m" x="723.57" y="364.73" fill="#d28c14" stroke="#d28c14">57°</text>
<text class="m" x="757.22" y="364.73" fill="#d28c14" stroke="#d28c14">(47°)</text>
<rect x="313" y="355.88" width="6.8" height="10.87" fill="#c00000"/>
<text class="m" x="313.04" y="364.73" fill="#fff" stroke="#fff" dx="0.3">C</text>
<rect x="306.2" y="355.88" width="6.8" height="10.87" fill="#ff8080"/>
<text class="m" x="306.31" y="364.73" fill="#fff" stroke="#fff" dx="0.3">a</text>
<text class="m" x="326.50" y="375.90" fill="#8206d6" stroke="#8206d6">K05HE       5               -37.9   -116.8  2Edge   53.3</text>
<text class="m" x="723.57" y="375.90" fill="#dc3c14" stroke="#dc3c14">20°</text>
<text class="m" x="757.22" y="375.90" fill="#dc3c14" stroke="#dc3c14">(10°)</text>
<rect x="313" y="367.05" width="6.8" height="10.87" fill="#c00000"/>
<text class="m" x="313.04" y="375.90" fill="#fff" stroke="#fff" dx="0.3">C</text>
<rect x="306.2" y="367.05" width="6.8" height="10.87" fill="#ff8080"/>
<text class="m" x="306.31" y="375.90" fill="#fff" stroke="#fff" dx="0.3">a</text>
<text class="m" x="326.50" y="387.07" fill="#0a5ad6" stroke="#0a5ad6">K25FZ      25 (25.1)        -39.4   -130.3  2Edge   62.0</text>
<text class="m" x="716.84" y="387.07" fill="#9a14aa" stroke="#9a14aa">286°</text>
<text class="m" x="750.49" y="387.07" fill="#9a14aa" stroke="#9a14aa">(276°)</text>
<rect x="313" y="378.22" width="6.8" height="10.87" fill="#c00000"/>
<text class="m" x="313.04" y="387.07" fill="#fff" stroke="#fff" dx="0.3">C</text>
<rect x="306.2" y="378.22" width="6.8" height="10.87" fill="#ff8080"/>
<text class="m" x="306.31" y="387.07" fill="#fff" stroke="#fff" dx="0.3">a</text>
<text class="m" x="326.50" y="398.24" fill="#8206d6" stroke="#8206d6">K06LX       6               -39.6   -118.5  2Edge   53.3</text>
<text class="m" x="723.57" y="398.24" fill="#dc3c14" stroke="#dc3c14">20°</text>
<text class="m" x="757.22" y="398.24" fill="#dc3c14" stroke="#dc3c14">(10°)</text>
<rect x="313" y="389.39" width="6.8" height="10.87" fill="#c00000"/>
<text class="m" x="313.04" y="398.24" fill="#fff" stroke="#fff" dx="0.3">C</text>
<rect x="306.2" y="389.39" width="6.8" height="10.87" fill="#ff8080"/>
<text class="m" x="306.31" y="398.24" fill="#fff" stroke="#fff" dx="0.3">a</text>
<rect x="346.6" y="405" width="7" height="12" fill="#c00000"/>
<text class="m" x="346.9" y="414.6" fill="#fff">C</text>
<text class="s" x="361" y="416" font-size="11" letter-spacing="0.8">= Co-channel warning</text>
<rect x="557.9" y="405" width="6.6" height="12" fill="#ff8080"/>
<text class="m" x="557.9" y="414.6" fill="#fff">a</text>
<text class="s" x="571.5" y="416" font-size="11" letter-spacing="0.8">= Adjacent channel warning</text>
<rect x="39.1" y="637" width="10" height="123.3" fill="#ebebeb"/>
<rect x="70.3" y="637" width="30.5" height="123.3" fill="#ebebeb"/>
<path d="M9,645.50 H173 M216,645.50 H792" stroke="#747474" stroke-width="1" stroke-dasharray="1 1" fill="none" shape-rendering="crispEdges"/>
<path d="M9,657.50 H173 M216,657.50 H792" stroke="#747474" stroke-width="1" stroke-dasharray="1 1" fill="none" shape-rendering="crispEdges"/>
<path d="M9,670.50 H173 M216,670.50 H792" stroke="#747474" stroke-width="1" stroke-dasharray="1 1" fill="none" shape-rendering="crispEdges"/>
<path d="M9,683.50 H173 M216,683.50 H792" stroke="#747474" stroke-width="1" stroke-dasharray="1 1" fill="none" shape-rendering="crispEdges"/>
<path d="M9,695.50 H173 M216,695.50 H792" stroke="#747474" stroke-width="1" stroke-dasharray="1 1" fill="none" shape-rendering="crispEdges"/>
<path d="M9,708.50 H173 M216,708.50 H792" stroke="#747474" stroke-width="1" stroke-dasharray="1 1" fill="none" shape-rendering="crispEdges"/>
<path d="M9,721.50 H173 M216,721.50 H792" stroke="#747474" stroke-width="1" stroke-dasharray="1 1" fill="none" shape-rendering="crispEdges"/>
<path d="M9,734.50 H173 M216,734.50 H792" stroke="#747474" stroke-width="1" stroke-dasharray="1 1" fill="none" shape-rendering="crispEdges"/>
<path d="M9,746.50 H173 M216,746.50 H792" stroke="#747474" stroke-width="1" stroke-dasharray="1 1" fill="none" shape-rendering="crispEdges"/>
<path d="M12.2,632.7 H7.8 V760.3 H10.5" stroke="#000" stroke-width="1.4" fill="none"/>
<path d="M65.5,632.7 H110.2" stroke="#000" stroke-width="1.4" fill="none"/>
<path d="M163.3,632.7 H173.5 V760.3 H171.5" stroke="#000" stroke-width="1.4" fill="none"/>
<path d="M482.5,632.7 H214.8 V760.3 H216" stroke="#000" stroke-width="1.4" fill="none"/>
<path d="M524,632.7 H792.8 V760.3 H791" stroke="#000" stroke-width="1.4" fill="none"/>
<text class="s" x="39" y="635.8" text-anchor="middle" font-weight="bold" font-size="11" letter-spacing="0.3">VHF Lo</text>
<text class="s" x="137.5" y="635.8" text-anchor="middle" font-weight="bold" font-size="11" letter-spacing="0.4">VHF Hi</text>
<text class="s" x="503.4" y="635.8" text-anchor="middle" font-weight="bold" font-size="11">UHF</text>
<text class="s" x="194.1" y="635.8" text-anchor="middle" font-size="11">dBm</text>
<text class="s" x="194.1" y="647.70" text-anchor="middle" font-size="11">-10</text>
<text class="s" x="194.1" y="660.42" text-anchor="middle" font-size="11">-20</text>
<text class="s" x="194.1" y="673.14" text-anchor="middle" font-size="11">-30</text>
<text class="s" x="194.1" y="685.86" text-anchor="middle" font-size="11">-40</text>
<text class="s" x="194.1" y="698.58" text-anchor="middle" font-size="11">-50</text>
<text class="s" x="194.1" y="711.30" text-anchor="middle" font-size="11">-60</text>
<text class="s" x="194.1" y="724.02" text-anchor="middle" font-size="11">-70</text>
<text class="s" x="194.1" y="736.74" text-anchor="middle" font-size="11">-80</text>
<text class="s" x="194.1" y="749.46" text-anchor="middle" font-size="11">-90</text>
<text class="s" x="194.1" y="762" text-anchor="middle" font-size="9.2">Channel</text>
<text class="s" x="12.9" y="762.6" text-anchor="middle" font-size="7.4">2</text>
<text class="s" x="34.1" y="762.6" text-anchor="middle" font-size="7.4">4</text>
<text class="s" x="55.5" y="762.6" text-anchor="middle" font-size="7.4">5</text>
<text class="s" x="64.5" y="762.6" text-anchor="middle" font-size="7.4">6</text>
<text class="s" x="105.6" y="762.6" text-anchor="middle" font-size="7.4">7</text>
<text class="s" x="127.0" y="762.6" text-anchor="middle" font-size="7.4">9</text>
<text class="s" x="147.8" y="762.6" text-anchor="middle" font-size="7.4">11</text>
<text class="s" x="168.1" y="762.6" text-anchor="middle" font-size="7.4">13</text>
<path d="M8.0,760.3 H9.9" stroke="#000" stroke-width="1.3"/>
<path d="M15.9,760.3 H31.1" stroke="#000" stroke-width="1.3"/>
<path d="M37.1,760.3 H52.5" stroke="#000" stroke-width="1.3"/>
<path d="M58.5,760.3 H61.5" stroke="#000" stroke-width="1.3"/>
<path d="M67.5,760.3 H102.6" stroke="#000" stroke-width="1.3"/>
<path d="M108.6,760.3 H124.0" stroke="#000" stroke-width="1.3"/>
<path d="M130.0,760.3 H142.6" stroke="#000" stroke-width="1.3"/>
<path d="M153.0,760.3 H162.9" stroke="#000" stroke-width="1.3"/>
<text class="s" x="219.9" y="762.6" text-anchor="middle" font-size="7.4">14</text>
<text class="s" x="240.5" y="762.6" text-anchor="middle" font-size="7.4">16</text>
<text class="s" x="271.4" y="762.6" text-anchor="middle" font-size="7.4">19</text>
<text class="s" x="302.4" y="762.6" text-anchor="middle" font-size="7.4">22</text>
<text class="s" x="333.3" y="762.6" text-anchor="middle" font-size="7.4">25</text>
<text class="s" x="364.2" y="762.6" text-anchor="middle" font-size="7.4">28</text>
<text class="s" x="395.2" y="762.6" text-anchor="middle" font-size="7.4">31</text>
<text class="s" x="426.1" y="762.6" text-anchor="middle" font-size="7.4">34</text>
<text class="s" x="457.0" y="762.6" text-anchor="middle" font-size="7.4">37</text>
<text class="s" x="488.0" y="762.6" text-anchor="middle" font-size="7.4">40</text>
<text class="s" x="518.9" y="762.6" text-anchor="middle" font-size="7.4">43</text>
<text class="s" x="549.8" y="762.6" text-anchor="middle" font-size="7.4">46</text>
<text class="s" x="580.8" y="762.6" text-anchor="middle" font-size="7.4">49</text>
<text class="s" x="611.7" y="762.6" text-anchor="middle" font-size="7.4">52</text>
<text class="s" x="642.6" y="762.6" text-anchor="middle" font-size="7.4">55</text>
<text class="s" x="673.5" y="762.6" text-anchor="middle" font-size="7.4">58</text>
<text class="s" x="704.5" y="762.6" text-anchor="middle" font-size="7.4">61</text>
<text class="s" x="735.4" y="762.6" text-anchor="middle" font-size="7.4">64</text>
<text class="s" x="766.3" y="762.6" text-anchor="middle" font-size="7.4">67</text>
<text class="s" x="787.0" y="762.6" text-anchor="middle" font-size="7.4">69</text>
<path d="M225.1,760.3 H235.3" stroke="#000" stroke-width="1.3"/>
<path d="M245.7,760.3 H266.2" stroke="#000" stroke-width="1.3"/>
<path d="M276.6,760.3 H297.2" stroke="#000" stroke-width="1.3"/>
<path d="M307.6,760.3 H328.1" stroke="#000" stroke-width="1.3"/>
<path d="M338.5,760.3 H359.0" stroke="#000" stroke-width="1.3"/>
<path d="M369.4,760.3 H390.0" stroke="#000" stroke-width="1.3"/>
<path d="M400.4,760.3 H420.9" stroke="#000" stroke-width="1.3"/>
<path d="M431.3,760.3 H451.8" stroke="#000" stroke-width="1.3"/>
<path d="M462.2,760.3 H482.8" stroke="#000" stroke-width="1.3"/>
<path d="M493.2,760.3 H513.7" stroke="#000" stroke-width="1.3"/>
<path d="M524.1,760.3 H544.6" stroke="#000" stroke-width="1.3"/>
<path d="M555.0,760.3 H575.5" stroke="#000" stroke-width="1.3"/>
<path d="M586.0,760.3 H606.5" stroke="#000" stroke-width="1.3"/>
<path d="M616.9,760.3 H637.4" stroke="#000" stroke-width="1.3"/>
<path d="M647.8,760.3 H668.3" stroke="#000" stroke-width="1.3"/>
<path d="M678.7,760.3 H699.3" stroke="#000" stroke-width="1.3"/>
<path d="M709.7,760.3 H730.2" stroke="#000" stroke-width="1.3"/>
<path d="M740.6,760.3 H761.1" stroke="#000" stroke-width="1.3"/>
<path d="M771.5,760.3 H781.8" stroke="#000" stroke-width="1.3"/>
<g opacity="0.5"><rect x="7.5" y="737.9" width="12" height="7" rx="3.5" fill="#fff200"/><rect x="9.3" y="739.7" width="8.4" height="3.4" fill="#8206d6"/>
<text class="s" font-size="9.6" fill="#8206d6" stroke="#8206d6" stroke-width="0.25" transform="translate(17.0,735.5) rotate(-90)">K02GJ</text></g>
<g opacity="1.0"><rect x="58.5" y="705.0" width="12" height="7" rx="3.5" fill="#fff200"/><rect x="60.3" y="706.8" width="8.4" height="3.4" fill="#8206d6"/>
<text class="s" font-size="9.6" fill="#8206d6" stroke="#8206d6" stroke-width="0.25" transform="translate(68.0,702.6) rotate(-90)">K06HZ</text></g>
<g opacity="1.0"><rect x="120.3" y="696.7" width="12" height="7" rx="3.5" fill="#fff200"/><rect x="122.1" y="698.5" width="8.4" height="3.4" fill="#8206d6"/>
<text class="s" font-size="9.6" fill="#8206d6" stroke="#8206d6" stroke-width="0.25" transform="translate(129.8,694.3) rotate(-90)">K09QA</text></g>
<g opacity="1.0"><rect x="161.7" y="701.0" width="12" height="7" rx="3.5" fill="#fff200"/><rect x="163.5" y="702.8" width="8.4" height="3.4" fill="#8206d6"/>
<text class="s" font-size="9.6" fill="#8206d6" stroke="#8206d6" stroke-width="0.25" transform="translate(171.2,698.6) rotate(-90)">K13ML</text></g>
<rect x="287.7" y="752.9" width="8.8" height="3.8" rx="0.8" fill="#0a5ad6"/>
<text class="s" font-size="9.5" fill="#0a5ad6" stroke="#0a5ad6" stroke-width="0.08" transform="translate(295.6,749.8) rotate(-90)">K21JK-D</text>
<rect x="318.6" y="701.4" width="8.8" height="3.8" rx="0.8" fill="#0a5ad6"/>
<text class="s" font-size="9.5" fill="#0a5ad6" stroke="#0a5ad6" stroke-width="0.08" transform="translate(326.5,698.3) rotate(-90)">K24JO-D</text>
<rect x="504.2" y="703.1" width="8.8" height="3.8" rx="0.8" fill="#0a5ad6"/>
<text class="s" font-size="9.5" fill="#0a5ad6" stroke="#0a5ad6" stroke-width="0.08" transform="translate(512.1,700.0) rotate(-90)">K42JR-D</text>
</svg>
</body></html>
